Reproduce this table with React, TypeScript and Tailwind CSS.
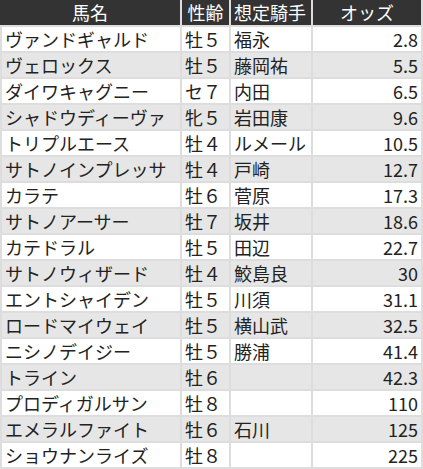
const rows: [string, string, string, string][] = [
  ["ヴァンドギャルド", "牡５", "福永", "2.8"],
  ["ヴェロックス", "牡５", "藤岡祐", "5.5"],
  ["ダイワキャグニー", "セ７", "内田", "6.5"],
  ["シャドウディーヴァ", "牝５", "岩田康", "9.6"],
  ["トリプルエース", "牡４", "ルメール", "10.5"],
  ["サトノインプレッサ", "牡４", "戸崎", "12.7"],
  ["カラテ", "牡６", "菅原", "17.3"],
  ["サトノアーサー", "牡７", "坂井", "18.6"],
  ["カテドラル", "牡５", "田辺", "22.7"],
  ["サトノウィザード", "牡４", "鮫島良", "30"],
  ["エントシャイデン", "牡５", "川須", "31.1"],
  ["ロードマイウェイ", "牡５", "横山武", "32.5"],
  ["ニシノデイジー", "牡５", "勝浦", "41.4"],
  ["トライン", "牡６", "", "42.3"],
  ["プロディガルサン", "牡８", "", "110"],
  ["エメラルファイト", "牡６", "石川", "125"],
  ["ショウナンライズ", "牡８", "", "225"],
];

const font = { fontFamily: '"Noto Sans CJK JP", "Noto Sans", sans-serif' };

export default function App() {
  return (
    <div className="w-[423px] h-[469px] bg-[#dddddd] text-[18px] leading-[24px]" style={font}>
      <div className="grid grid-cols-[180px_47px_80px_108px] gap-x-[2px] pr-[2px] bg-[#dddddd]">
        {["馬名", "性齢", "想定騎手", "オッズ"].map((h, i) => (
          <div
            key={h}
            className={`h-[25px] bg-[#333333] text-white leading-[25px] whitespace-nowrap ${
              i === 2 ? "pl-[3px]" : "text-center"
            }`}
          >
            {h}
          </div>
        ))}
      </div>
      <div className="grid grid-cols-[178px_47px_80px_108px] gap-[2px] px-[2px] pt-[2px] pb-[2px]">
        {rows.map((r, idx) => {
          const bg = idx % 2 === 0 ? "bg-white" : "bg-[#e6e6e6]";
          return [
            <div key={`${idx}a`} className={`${bg} h-[24px] pl-[3px] text-[#222] whitespace-nowrap overflow-hidden`}>
              {r[0]}
            </div>,
            <div key={`${idx}b`} className={`${bg} h-[24px] pl-[3px] text-[#222] whitespace-nowrap`}>
              {r[1]}
            </div>,
            <div key={`${idx}c`} className={`${bg} h-[24px] pl-[3px] text-[#222] whitespace-nowrap`}>
              {r[2]}
            </div>,
            <div key={`${idx}d`} className={`${bg} h-[24px] pr-[3px] text-right text-[#222]`}>
              {r[3]}
            </div>,
          ];
        })}
      </div>
    </div>
  );
}
